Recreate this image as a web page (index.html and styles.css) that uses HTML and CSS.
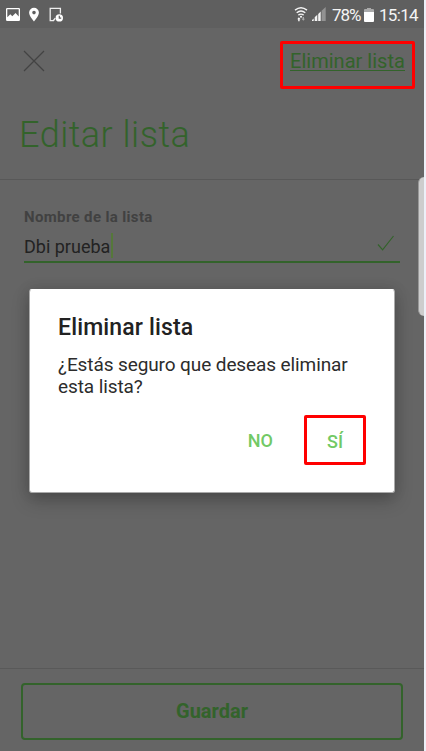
FILE: index.html
```html
<!DOCTYPE html>
<html lang="es">
<head>
<meta charset="utf-8">
<title>Editar lista</title>
<link rel="stylesheet" href="styles.css">
</head>
<body>
<div class="phone">
  <header class="status">
    <svg class="status-left" width="70" height="28" viewBox="0 0 70 28">
      <path fill="#fff" fill-rule="evenodd" d="M7.300 8h11.400a1.300 1.300 0 0 1 1.300 1.300v10.400a1.300 1.300 0 0 1-1.300 1.300H7.300A1.300 1.300 0 0 1 6 19.700V9.300A1.300 1.300 0 0 1 7.300 8zM7.300 9.300v8l3-3 2 2 3.300-3.200 3.100 3.300V9.300z"/>
      <path fill="#fff" fill-rule="evenodd" d="M34 7.700a4.900 4.900 0 0 1 4.900 4.900c0 3.500-4.900 9-4.900 9s-4.900-5.500-4.900-9A4.900 4.900 0 0 1 34 7.700zm0 3.100a1.800 1.800 0 1 0 0 3.600 1.800 1.800 0 0 0 0-3.600z"/>
      <path fill="none" stroke="#eee" stroke-width="1.300" d="M60.400 13.500V8.300h-10.200v12.400H54M53.500 20.500l1.800-2.300"/>
      <circle cx="59.300" cy="17.900" r="3.700" fill="#fff"/>
      <path fill="none" stroke="#5f5f5f" stroke-width="1.200" d="M59.300 15.800v2.300h1.900"/>
    </svg>
    <div class="status-right">
      <svg width="36" height="28" viewBox="0 0 36 28">
        <g fill="none" stroke="#f4f4f4" stroke-width="1.400"><path d="M1 10.100q6-4.700 12 0M2.700 12.700q4.300-3.400 8.600 0M4.400 15.100q2.600-2 5.200 0"/></g>
        <circle cx="7" cy="16.800" r="1" fill="#fff"/>
        <path fill="#fff" d="M3.200 19.300l1.700-2 1.700 2h-1v2H4.200v-2z"/><path fill="#aaa" d="M7.600 18.800h1v-1.700H10v1.700h1l-1.700 2z"/>
        <path fill="#f4f4f4" d="M18 21v-1l1.700-1.600V21zM20.700 21v-3.700l2.600-2.500V21zM24.200 21v-6.900l2.500-2.500V21z"/>
        <path fill="#929292" d="M27.600 21V10.800L31.700 7v14z"/>
      </svg>
      <span class="percent">78%</span>
      <svg class="battery" width="10" height="14" viewBox="0 0 10 14"><path fill="#aaa" d="M3 0h4v1h2q1 0 1 1v3H0V2q0-1 1-1h2z"/><path fill="#fff" d="M0 4h10v9q0 1-1 1H1q-1 0-1-1z"/></svg>
      <span class="clock">15:14</span>
    </div>
  </header>
  <main class="page">
    <section class="heading">
      <div class="toolbar">
        <svg width="22" height="22" viewBox="0 0 22 22"><path fill="none" stroke="#434343" stroke-width="1.200" d="M1 1l20 20M21 1L1 21"/></svg>
        <div class="mark delete"><a>Eliminar lista</a></div>
      </div>
      <h1>Editar lista</h1>
    </section>
    <section class="field">
      <label>Nombre de la lista</label>
      <div class="input">
        <span class="value">Dbi prueba</span><i class="caret"></i>
        <svg class="check" width="18" height="17" viewBox="0 0 18 17"><path fill="none" stroke="#33632b" stroke-width="1.200" d="M1 9.500l4.600 5.300L16.500 1"/></svg>
      </div>
    </section>
  </main>
  <footer><div class="save"><span>Guardar</span></div></footer>
  <div class="edge"></div>
  <div class="dialog">
    <h2>Eliminar lista</h2>
    <p><span class="line1">¿Estás seguro que deseas eliminar</span><br><span class="line2">esta lista?</span></p>
    <div class="actions"><span class="no">NO</span><div class="mark yes"><span>SÍ</span></div></div>
  </div>
</div>
</body>
</html>
```
FILE: styles.css
```css
* { box-sizing: border-box; }
body { margin: 0; background: #edf0f8; font-family: Roboto, "Liberation Sans", sans-serif; overflow: hidden; }
.phone { position: relative; width: 424px; height: 751px; background: #656565; display: flex; flex-direction: column; overflow: hidden; }
.status { height: 28px; background: #5f5f5f; display: flex; justify-content: space-between; color: #f4f4f4; font-size: 17px; line-height: 30px; flex: none; }
.status-right { display: flex; width: 130px; }
.percent { width: 28px; margin-left: 2px; letter-spacing: -1px; }
.battery { flex: none; margin: 8px 5px 0 4px; }
.clock { letter-spacing: -.7px; white-space: nowrap; }
.page { flex: 1; }
.heading { height: 152px; border-bottom: 1px solid #585858; }
.toolbar { display: flex; justify-content: space-between; padding: 13px 9px 0 23px; height: 72px; }
.toolbar > svg { margin-top: 9px; }
.mark { border: 3px solid #f00; border-radius: 2px; }
.delete { width: 135px; height: 48px; padding: 5px 0 0 7px; font-size: 20px; line-height: 25px; color: #33632b; white-space: nowrap; }
.delete a { display: block; width: 115px; height: 22px; border-bottom: 1px solid #33632b; letter-spacing: .02px; }
h1 { margin: 14px 0 0 19px; font-weight: 300; font-size: 36px; line-height: 42px; color: #33632b; letter-spacing: .5px; white-space: nowrap; }
.field { padding: 27px 24px 0; }
.field label { display: block; font-size: 15px; font-weight: 700; line-height: 20px; color: #414141; letter-spacing: .35px; }
.input { display: flex; height: 36px; border-bottom: 2px solid #33632b; line-height: 40px; font-size: 18px; color: #222; }
.caret { width: 2px; height: 25px; margin: 6px 0 0 1px; background: #55783a; }
.check { margin: 8px 5px 0 auto; }
footer { height: 83px; border-top: 1px solid #595959; padding: 14px 21px 0; flex: none; }
.save { height: 57px; border: 2px solid #33632b; border-radius: 4px; color: #33632b; font-size: 20px; font-weight: 700; line-height: 53px; text-align: center; }
.edge { position: absolute; right: 0; top: 177px; width: 6px; height: 139px; border-radius: 7px 0 0 7px; background: #cdcdcd; border-left: 1px solid #999; }
.dialog { position: absolute; left: 29px; top: 289px; width: 366px; height: 204px; border-radius: 3px; background: #fff; border: 1px solid #aaa; border-top-color: #fff; padding: 24px 28px 0; box-shadow: 0 8px 18px rgba(0,0,0,.22), 0 0 14px rgba(0,0,0,.12); color: #222; }
h2 { margin: 0; font-size: 23px; font-weight: 500; line-height: 28px; letter-spacing: .15px; }
p { margin: 12px 0 0; font-size: 19px; line-height: 22px; white-space: nowrap; color: #2c2c2c; letter-spacing: -.1px; }
.actions { display: flex; justify-content: flex-end; margin-top: 17px; font-size: 18px; font-weight: 500; line-height: 52px; color: #72c965; }
.no { margin-right: 31px; }
.yes { width: 62px; height: 50px; line-height: 47px; text-align: center; }
```
